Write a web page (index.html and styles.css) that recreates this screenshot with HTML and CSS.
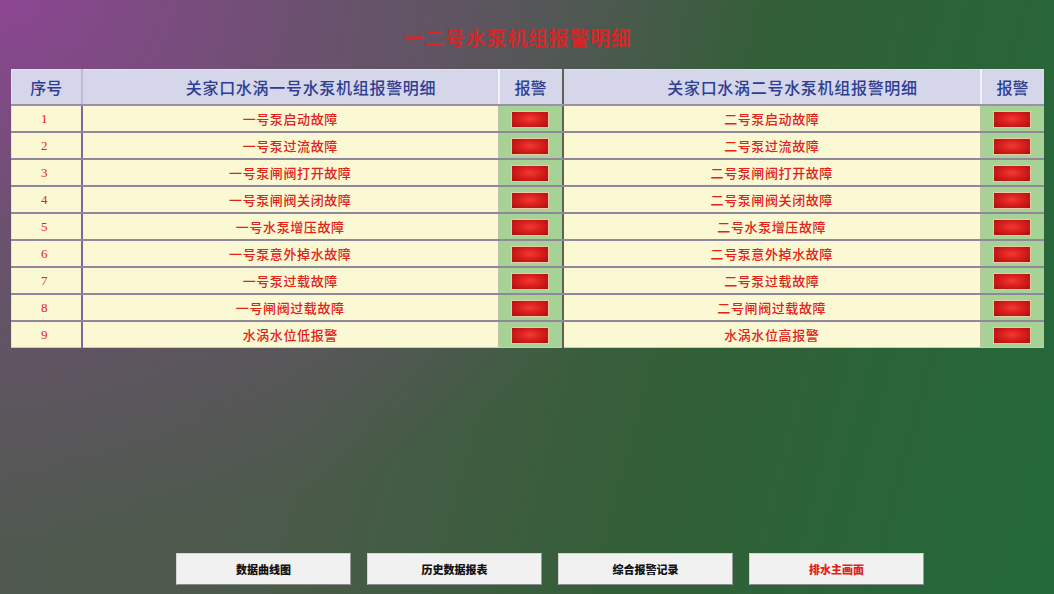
FILE: index.html
```html
<!DOCTYPE html>
<html lang="zh">
<head>
<meta charset="utf-8">
<title>一二号水泵机组报警明细</title>
<link rel="stylesheet" href="styles.css">
</head>
<body>
<div class="screen">
  <h1 class="title">一二号水泵机组报警明细</h1>
  <table class="alarms">
    <colgroup>
      <col class="c-no"><col class="c-name"><col class="c-al"><col class="c-name2"><col class="c-al2">
    </colgroup>
    <thead>
      <tr>
        <th class="no">序号</th>
        <th class="name">关家口水涡一号水泵机组报警明细</th>
        <th class="al">报警</th>
        <th class="name2">关家口水涡二号水泵机组报警明细</th>
        <th class="al2">报警</th>
      </tr>
    </thead>
    <tbody>
      <tr><td class="no">1</td><td class="name">一号泵启动故障</td><td class="al"><span class="lamp"></span></td><td class="name2">二号泵启动故障</td><td class="al2"><span class="lamp"></span></td></tr>
      <tr><td class="no">2</td><td class="name">一号泵过流故障</td><td class="al"><span class="lamp"></span></td><td class="name2">二号泵过流故障</td><td class="al2"><span class="lamp"></span></td></tr>
      <tr><td class="no">3</td><td class="name">一号泵闸阀打开故障</td><td class="al"><span class="lamp"></span></td><td class="name2">二号泵闸阀打开故障</td><td class="al2"><span class="lamp"></span></td></tr>
      <tr><td class="no">4</td><td class="name">一号泵闸阀关闭故障</td><td class="al"><span class="lamp"></span></td><td class="name2">二号泵闸阀关闭故障</td><td class="al2"><span class="lamp"></span></td></tr>
      <tr><td class="no">5</td><td class="name">一号水泵增压故障</td><td class="al"><span class="lamp"></span></td><td class="name2">二号水泵增压故障</td><td class="al2"><span class="lamp"></span></td></tr>
      <tr><td class="no">6</td><td class="name">一号泵意外掉水故障</td><td class="al"><span class="lamp"></span></td><td class="name2">二号泵意外掉水故障</td><td class="al2"><span class="lamp"></span></td></tr>
      <tr><td class="no">7</td><td class="name">一号泵过载故障</td><td class="al"><span class="lamp"></span></td><td class="name2">二号泵过载故障</td><td class="al2"><span class="lamp"></span></td></tr>
      <tr><td class="no">8</td><td class="name">一号闸阀过载故障</td><td class="al"><span class="lamp"></span></td><td class="name2">二号闸阀过载故障</td><td class="al2"><span class="lamp"></span></td></tr>
      <tr><td class="no">9</td><td class="name">水涡水位低报警</td><td class="al"><span class="lamp"></span></td><td class="name2">水涡水位高报警</td><td class="al2"><span class="lamp"></span></td></tr>
    </tbody>
  </table>
  <div class="spacer"></div>
  <nav class="buttons">
    <button class="btn">数据曲线图</button>
    <button class="btn">历史数据报表</button>
    <button class="btn">综合报警记录</button>
    <button class="btn btn-home">排水主画面</button>
  </nav>
</div>
</body>
</html>
```

FILE: styles.css
```css
html, body {
  margin: 0;
  padding: 0;
}
body {
  width: 1054px;
  height: 594px;
  overflow: hidden;
  font-family: "Noto Sans CJK SC", "Noto Sans", sans-serif;
  background:
    radial-gradient(ellipse 760px 540px at 0 0, rgba(140, 70, 146, 1) 0%, rgba(118, 78, 124, 0.65) 45%, rgba(100, 85, 105, 0) 100%),
    linear-gradient(105deg, #535853 0%, #4b5a4a 35%, #325f37 65%, #23693a 100%);
}
.screen {
  height: 594px;
  display: flex;
  flex-direction: column;
}
.title {
  margin: 25px 0 0 0;
  height: 44px;
  padding-right: 19px;
  text-align: center;
  font-size: 20px;
  line-height: 26px;
  font-weight: 700;
  letter-spacing: 0.7px;
  color: #d3282a;
}
.alarms {
  margin-left: 11px;
  width: 1032px;
  table-layout: fixed;
  border-collapse: collapse;
  border-left: 1px solid #e6e0ec;
  border-top: 1px solid #e6e0ec;
}
.c-no { width: 70px; }
.c-name { width: 417px; }
.c-al { width: 64px; }
.c-name2 { width: 418px; }
.c-al2 { width: 63px; }

.alarms th {
  height: 34px;
  padding: 0;
  background: #d6d6ea;
  color: #2d3e92;
  font-size: 16px;
  font-weight: 500;
  text-align: center;
  border-bottom: 2px solid #9a90a8;
}
.alarms th.name, .alarms th.name2 {
  padding-left: 42px;
  letter-spacing: 0.7px;
}
.alarms th.no { border-right: 2px solid #c2b8d8; }
.alarms th.name { border-right: 2px solid #f2f0f8; }
.alarms th.al { border-right: 2px solid #5c6256; }
.alarms th.name2 { border-right: 2px solid #f2f0f8; }

.alarms td {
  height: 25px;
  padding: 0;
  background: #fbf8d4;
  color: #e2231a;
  text-align: center;
  font-size: 13px;
  font-weight: 500;
  letter-spacing: 0.6px;
  border-bottom: 2px solid #8e889a;
}
.alarms tbody tr:last-child td {
  border-bottom: 1px solid #cfc9b0;
}
.alarms td.no {
  font-family: "Liberation Serif", serif;
  font-weight: 400;
  font-size: 13px;
  letter-spacing: 0;
  padding-right: 4px;
  border-right: 2px solid #7a68a6;
}
.alarms td.name { border-right: 1px solid #c0c0a8; }
.alarms td.al, .alarms td.al2 {
  background: #a7d296;
}
.alarms td.al { border-right: 2px solid #5c6256; }
.alarms td.name2 { border-right: 1px solid #c0c0a8; }

.lamp {
  display: inline-block;
  vertical-align: middle;
  width: 36px;
  height: 15px;
  border: 1px solid #e9cba8;
  background: radial-gradient(ellipse at 50% 45%, #f23a34 0%, #d91f1d 45%, #a8100f 100%);
}

.spacer { flex: 1; }

.buttons {
  display: flex;
  gap: 16px;
  padding-left: 176px;
  margin-bottom: 9px;
}
.btn {
  width: 175px;
  height: 32px;
  margin: 0;
  padding: 0;
  background: #f1f1f1;
  border: 1px solid #d4d4d4;
  border-bottom-color: #8a8a8a;
  border-right-color: #9a9a9a;
  font-family: "Noto Sans CJK SC", sans-serif;
  font-size: 11px;
  font-weight: 900;
  color: #111;
}
.btn-home { color: #e0231a; }
```
